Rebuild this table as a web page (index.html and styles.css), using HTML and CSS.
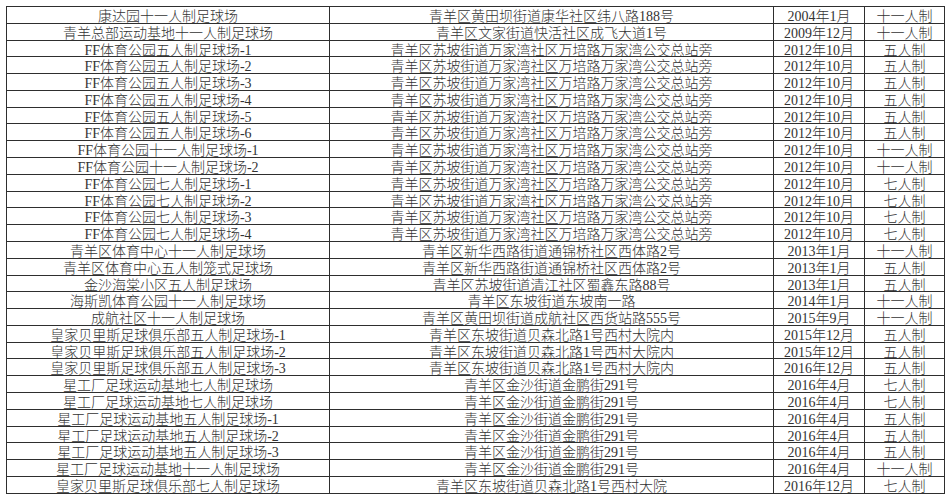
FILE: index.html
```html
<!DOCTYPE html>
<html lang="zh-CN">
<head>
<meta charset="utf-8">
<title>青羊区足球场</title>
<link rel="stylesheet" href="styles.css">
</head>
<body>
<div class="sheet">
<div class="c">康达园十一人制足球场</div><div class="c">青羊区黄田坝街道康华社区纬八路188号</div><div class="c">2004年1月</div><div class="c">十一人制</div>
<div class="c">青羊总部运动基地十一人制足球场</div><div class="c">青羊区文家街道快活社区成飞大道1号</div><div class="c">2009年12月</div><div class="c">十一人制</div>
<div class="c">FF体育公园五人制足球场-1</div><div class="c">青羊区苏坡街道万家湾社区万培路万家湾公交总站旁</div><div class="c">2012年10月</div><div class="c">五人制</div>
<div class="c">FF体育公园五人制足球场-2</div><div class="c">青羊区苏坡街道万家湾社区万培路万家湾公交总站旁</div><div class="c">2012年10月</div><div class="c">五人制</div>
<div class="c">FF体育公园五人制足球场-3</div><div class="c">青羊区苏坡街道万家湾社区万培路万家湾公交总站旁</div><div class="c">2012年10月</div><div class="c">五人制</div>
<div class="c">FF体育公园五人制足球场-4</div><div class="c">青羊区苏坡街道万家湾社区万培路万家湾公交总站旁</div><div class="c">2012年10月</div><div class="c">五人制</div>
<div class="c">FF体育公园五人制足球场-5</div><div class="c">青羊区苏坡街道万家湾社区万培路万家湾公交总站旁</div><div class="c">2012年10月</div><div class="c">五人制</div>
<div class="c">FF体育公园五人制足球场-6</div><div class="c">青羊区苏坡街道万家湾社区万培路万家湾公交总站旁</div><div class="c">2012年10月</div><div class="c">五人制</div>
<div class="c">FF体育公园十一人制足球场-1</div><div class="c">青羊区苏坡街道万家湾社区万培路万家湾公交总站旁</div><div class="c">2012年10月</div><div class="c">十一人制</div>
<div class="c">FF体育公园十一人制足球场-2</div><div class="c">青羊区苏坡街道万家湾社区万培路万家湾公交总站旁</div><div class="c">2012年10月</div><div class="c">十一人制</div>
<div class="c">FF体育公园七人制足球场-1</div><div class="c">青羊区苏坡街道万家湾社区万培路万家湾公交总站旁</div><div class="c">2012年10月</div><div class="c">七人制</div>
<div class="c">FF体育公园七人制足球场-2</div><div class="c">青羊区苏坡街道万家湾社区万培路万家湾公交总站旁</div><div class="c">2012年10月</div><div class="c">七人制</div>
<div class="c">FF体育公园七人制足球场-3</div><div class="c">青羊区苏坡街道万家湾社区万培路万家湾公交总站旁</div><div class="c">2012年10月</div><div class="c">七人制</div>
<div class="c">FF体育公园七人制足球场-4</div><div class="c">青羊区苏坡街道万家湾社区万培路万家湾公交总站旁</div><div class="c">2012年10月</div><div class="c">七人制</div>
<div class="c">青羊区体育中心十一人制足球场</div><div class="c">青羊区新华西路街道通锦桥社区西体路2号</div><div class="c">2013年1月</div><div class="c">十一人制</div>
<div class="c">青羊区体育中心五人制笼式足球场</div><div class="c">青羊区新华西路街道通锦桥社区西体路2号</div><div class="c">2013年1月</div><div class="c">五人制</div>
<div class="c">金沙海棠小区五人制足球场</div><div class="c">青羊区苏坡街道清江社区蜀鑫东路88号</div><div class="c">2013年1月</div><div class="c">五人制</div>
<div class="c">海斯凯体育公园十一人制足球场</div><div class="c">青羊区东坡街道东坡南一路</div><div class="c">2014年1月</div><div class="c">十一人制</div>
<div class="c">成航社区十一人制足球场</div><div class="c">青羊区黄田坝街道成航社区西货站路555号</div><div class="c">2015年9月</div><div class="c">十一人制</div>
<div class="c">皇家贝里斯足球俱乐部五人制足球场-1</div><div class="c">青羊区东坡街道贝森北路1号西村大院内</div><div class="c">2015年12月</div><div class="c">五人制</div>
<div class="c">皇家贝里斯足球俱乐部五人制足球场-2</div><div class="c">青羊区东坡街道贝森北路1号西村大院内</div><div class="c">2015年12月</div><div class="c">五人制</div>
<div class="c">皇家贝里斯足球俱乐部五人制足球场-3</div><div class="c">青羊区东坡街道贝森北路1号西村大院内</div><div class="c">2016年12月</div><div class="c">五人制</div>
<div class="c">星工厂足球运动基地七人制足球场</div><div class="c">青羊区金沙街道金鹏街291号</div><div class="c">2016年4月</div><div class="c">七人制</div>
<div class="c">星工厂足球运动基地七人制足球场</div><div class="c">青羊区金沙街道金鹏街291号</div><div class="c">2016年4月</div><div class="c">七人制</div>
<div class="c">星工厂足球运动基地五人制足球场-1</div><div class="c">青羊区金沙街道金鹏街291号</div><div class="c">2016年4月</div><div class="c">五人制</div>
<div class="c">星工厂足球运动基地五人制足球场-2</div><div class="c">青羊区金沙街道金鹏街291号</div><div class="c">2016年4月</div><div class="c">五人制</div>
<div class="c">星工厂足球运动基地五人制足球场-3</div><div class="c">青羊区金沙街道金鹏街291号</div><div class="c">2016年4月</div><div class="c">五人制</div>
<div class="c">星工厂足球运动基地十一人制足球场</div><div class="c">青羊区金沙街道金鹏街291号</div><div class="c">2016年4月</div><div class="c">十一人制</div>
<div class="c">皇家贝里斯足球俱乐部七人制足球场</div><div class="c">青羊区东坡街道贝森北路1号西村大院</div><div class="c">2016年12月</div><div class="c">七人制</div>
</div>
</body>
</html>
```

FILE: styles.css
```css
html, body {
  margin: 0;
  padding: 0;
  background: #ffffff;
}

body {
  padding: 6px 0 0 6px;
}

.sheet {
  display: grid;
  grid-template-columns: 323px 444px 91px 80px;
  grid-template-rows: repeat(29, 16.793px);
  width: 938px;
  border-left: 1px solid #2e2e2e;
  border-top: 1px solid #2e2e2e;
  font-family: "Liberation Serif", "Noto Sans CJK SC", serif;
  font-size: 14px;
  font-weight: 300;
  color: #333333;
}

.c {
  border-right: 1px solid #2e2e2e;
  border-bottom: 1px solid #2e2e2e;
  text-align: center;
  white-space: nowrap;
  line-height: 16px;
  padding-top: 2px;
  box-sizing: border-box;
}
```
